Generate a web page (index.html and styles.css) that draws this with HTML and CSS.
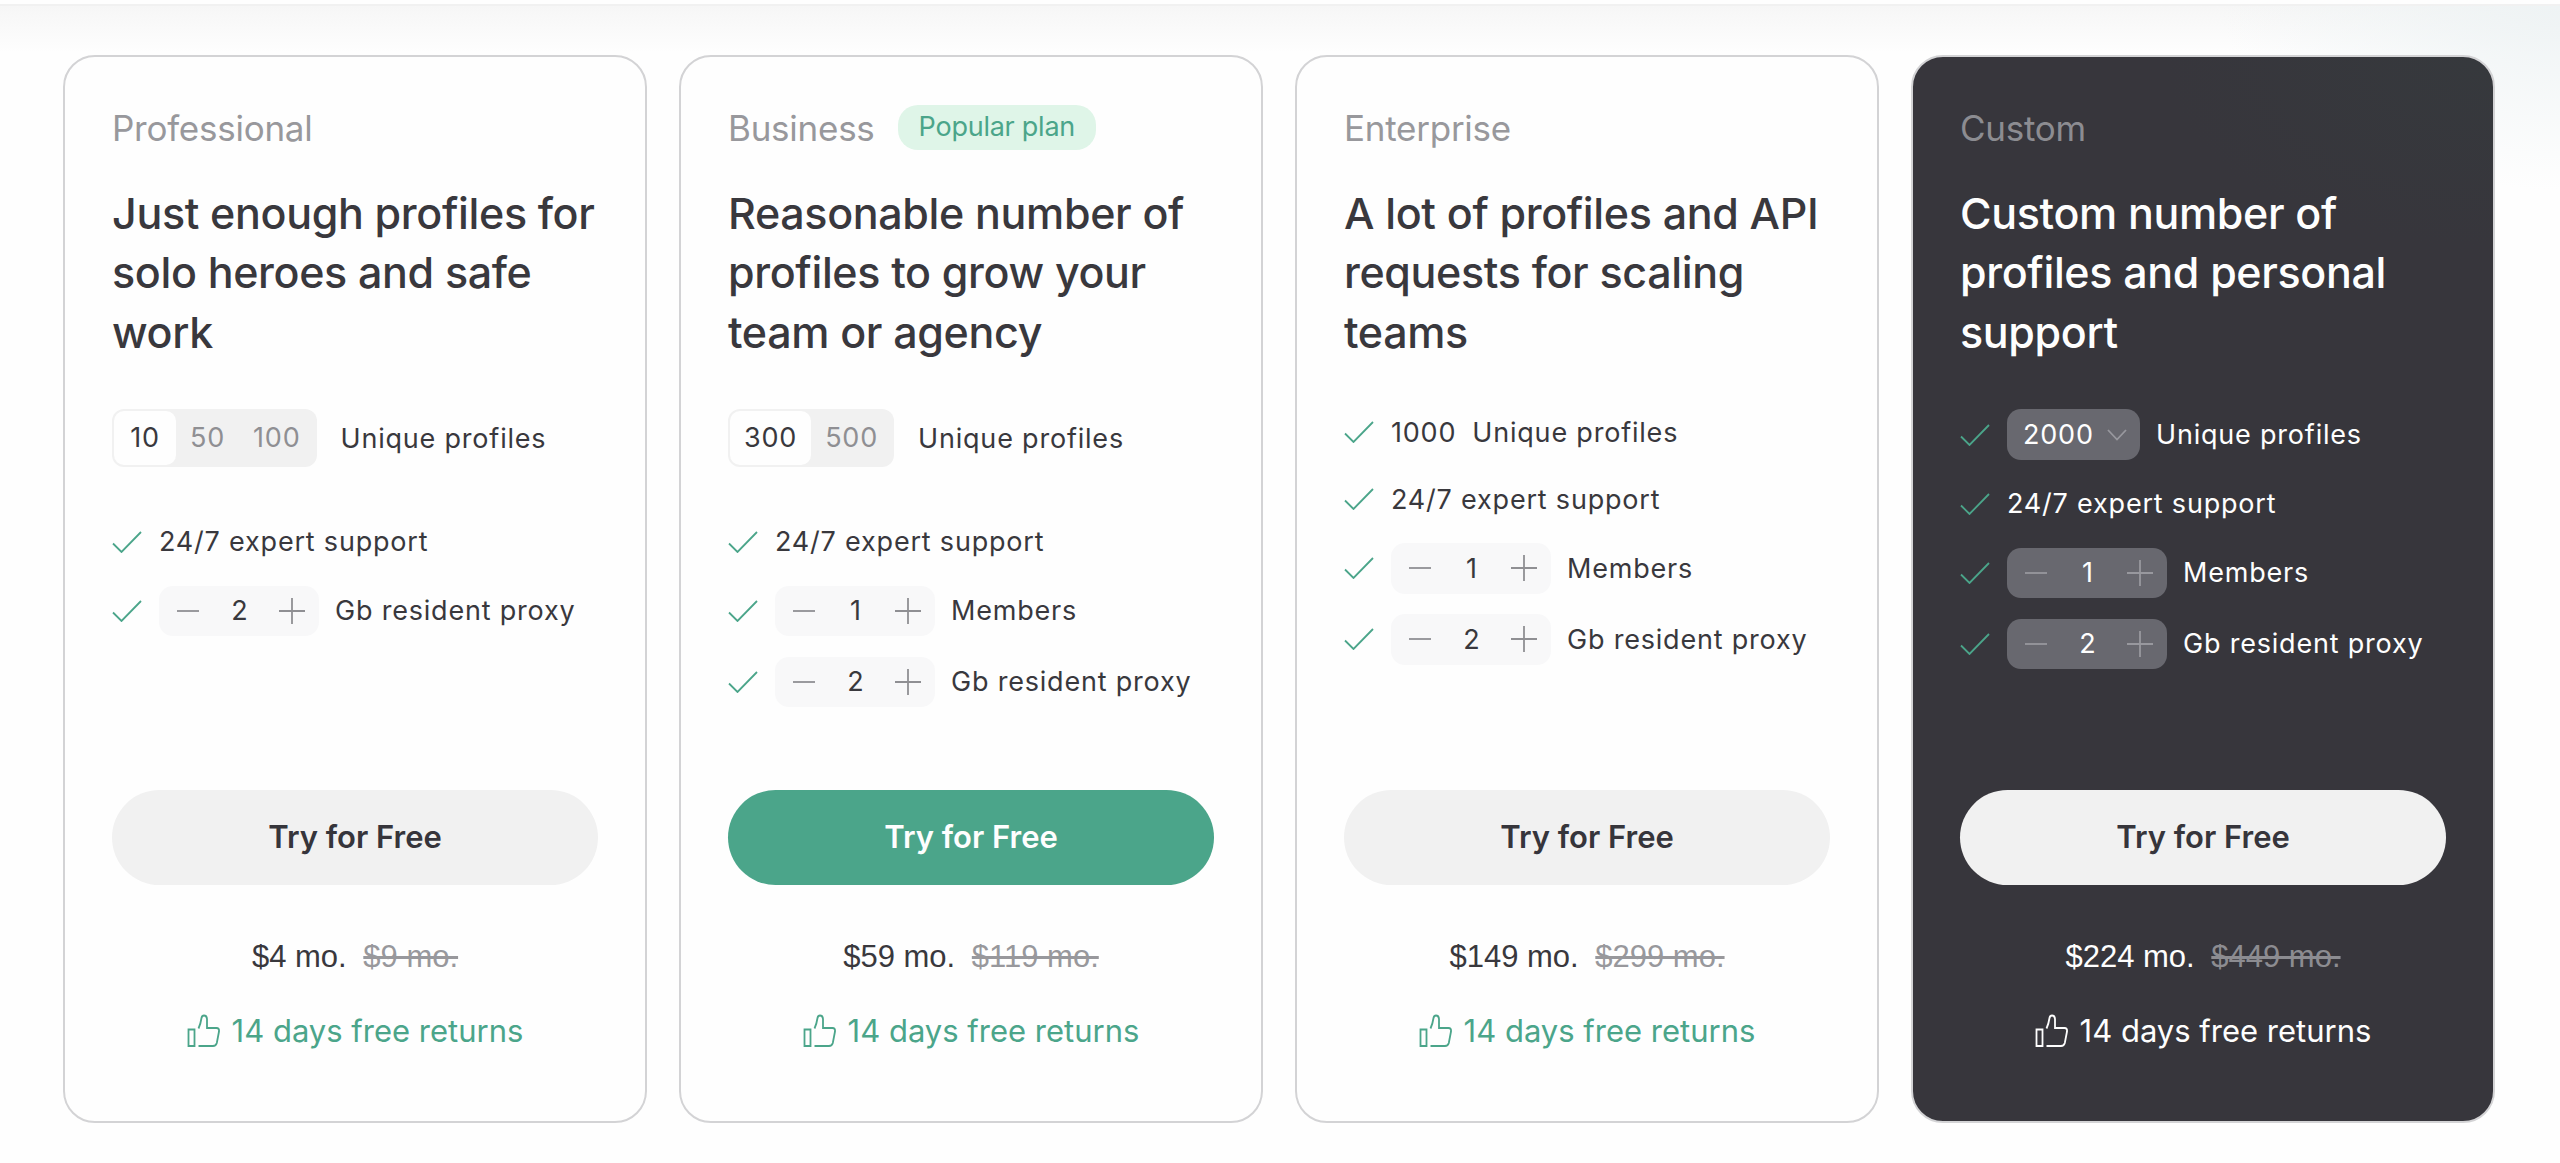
FILE: index.html
```html
<!DOCTYPE html>
<html lang="en">
<head>
  <meta charset="UTF-8">
  <meta name="viewport" content="width=device-width, initial-scale=1.0">
  <title>Pricing</title>
  <link rel="stylesheet" href="styles.css">
</head>
<body>
<!-- shared icons -->
<svg class="sprite" width="0" height="0">
  <symbol id="check" viewBox="0 0 30 22"><path d="M1 12.5 L9.5 21 L29 1"/></symbol>
  <symbol id="minus" viewBox="0 0 26 28"><path d="M2 14 H24"/></symbol>
  <symbol id="plus" viewBox="0 0 26 28"><path d="M0 14 H26 M13 1 V27"/></symbol>
  <symbol id="chevron" viewBox="0 0 20 12"><path d="M1 1 L10 10.5 L19 1"/></symbol>
  <symbol id="thumb" viewBox="0 0 34 34">
    <path d="M1.5 15.5 H7.5 V32 H1.5 Z"/>
    <path d="M11.5 32 H26 Q29 32 29.8 29 L32 17.5 Q32.4 14 29.5 14 H20 V5 Q19.8 1.5 17 1.5 Q15 1.5 14.5 4 Q13.5 10.5 11.5 14.5"/>
  </symbol>
</svg>

<div class="page">
  <div class="plans">

    <div class="plan">
      <div class="plan-name">Professional</div>
      <h2 class="plan-title">Just enough profiles for solo heroes and safe work</h2>
      <div class="features">
        <div class="feature feature-switch">
          <div class="switch"><span class="active">10</span><span>50</span><span>100</span></div>
          Unique profiles
        </div>
        <div class="feature"><svg class="check"><use href="#check"/></svg>24/7 expert support</div>
        <div class="feature"><svg class="check"><use href="#check"/></svg><div class="stepper"><svg><use href="#minus"/></svg><span>2</span><svg><use href="#plus"/></svg></div>Gb resident proxy</div>
      </div>
      <a class="btn">Try for Free</a>
      <div class="price">$4 mo. <s>$9 mo.</s></div>
      <div class="returns"><svg><use href="#thumb"/></svg>14 days free returns</div>
    </div>

    <div class="plan">
      <div class="plan-name">Business <span class="badge">Popular plan</span></div>
      <h2 class="plan-title">Reasonable number of profiles to grow your team or agency</h2>
      <div class="features">
        <div class="feature feature-switch">
          <div class="switch"><span class="active">300</span><span>500</span></div>
          Unique profiles
        </div>
        <div class="feature"><svg class="check"><use href="#check"/></svg>24/7 expert support</div>
        <div class="feature"><svg class="check"><use href="#check"/></svg><div class="stepper"><svg><use href="#minus"/></svg><span>1</span><svg><use href="#plus"/></svg></div>Members</div>
        <div class="feature"><svg class="check"><use href="#check"/></svg><div class="stepper"><svg><use href="#minus"/></svg><span>2</span><svg><use href="#plus"/></svg></div>Gb resident proxy</div>
      </div>
      <a class="btn btn-green">Try for Free</a>
      <div class="price">$59 mo. <s>$119 mo.</s></div>
      <div class="returns"><svg><use href="#thumb"/></svg>14 days free returns</div>
    </div>

    <div class="plan">
      <div class="plan-name">Enterprise</div>
      <h2 class="plan-title">A lot of profiles and API requests for scaling teams</h2>
      <div class="features">
        <div class="feature"><svg class="check"><use href="#check"/></svg><span class="amount">1000</span>Unique profiles</div>
        <div class="feature"><svg class="check"><use href="#check"/></svg>24/7 expert support</div>
        <div class="feature"><svg class="check"><use href="#check"/></svg><div class="stepper"><svg><use href="#minus"/></svg><span>1</span><svg><use href="#plus"/></svg></div>Members</div>
        <div class="feature"><svg class="check"><use href="#check"/></svg><div class="stepper"><svg><use href="#minus"/></svg><span>2</span><svg><use href="#plus"/></svg></div>Gb resident proxy</div>
      </div>
      <a class="btn">Try for Free</a>
      <div class="price">$149 mo. <s>$299 mo.</s></div>
      <div class="returns"><svg><use href="#thumb"/></svg>14 days free returns</div>
    </div>

    <div class="plan plan-dark">
      <div class="plan-name">Custom</div>
      <h2 class="plan-title">Custom number of profiles and personal support</h2>
      <div class="features">
        <div class="feature"><svg class="check"><use href="#check"/></svg><div class="select">2000<svg><use href="#chevron"/></svg></div>Unique profiles</div>
        <div class="feature"><svg class="check"><use href="#check"/></svg>24/7 expert support</div>
        <div class="feature"><svg class="check"><use href="#check"/></svg><div class="stepper"><svg><use href="#minus"/></svg><span>1</span><svg><use href="#plus"/></svg></div>Members</div>
        <div class="feature"><svg class="check"><use href="#check"/></svg><div class="stepper"><svg><use href="#minus"/></svg><span>2</span><svg><use href="#plus"/></svg></div>Gb resident proxy</div>
      </div>
      <a class="btn">Try for Free</a>
      <div class="price">$224 mo. <s>$449 mo.</s></div>
      <div class="returns"><svg><use href="#thumb"/></svg>14 days free returns</div>
    </div>

  </div>
</div>
</body>
</html>
```
FILE: styles.css
```css
* {
  box-sizing: border-box;
}
body {
  margin: 0;
  background: #fefefe;
  color: #39383d;
  font-family: Inter, "Liberation Sans", sans-serif;
}
.sprite {
  display: none;
}
svg {
  flex: none;
  fill: none;
  stroke: currentColor;
}
.page {
  height: 1163px;
  padding: 55px 65px 0 63px;
  background:
    linear-gradient(#fefefe 4px, #f1f1f1 4px, #f1f1f1 6px, transparent 6px),
    radial-gradient(ellipse 340px 190px at 2560px 0, #eef3f4, rgba(251, 253, 253, 0)),
    linear-gradient(#f6f6f6 6px, #fefefe 52px);
}
.plans {
  display: grid;
  grid-template-columns: repeat(4, 584px);
  gap: 32px;
}
.plan {
  display: flex;
  flex-direction: column;
  height: 1068px;
  padding: 48px 47px;
  border: 2px solid #d3d3d5;
  border-radius: 32px;
  background: #fefefe;
}
.plan-name {
  display: flex;
  align-items: center;
  gap: 23px;
  height: 45px;
  color: #98989c;
  font-size: 35px;
  letter-spacing: -0.25px;
}
.badge {
  height: 45px;
  padding: 0 21px;
  border-radius: 20px;
  background: #dff5e8;
  color: #4ba58a;
  font-size: 27px;
  line-height: 44px;
}
.plan-title {
  height: 178px;
  margin: 34px -20px 47px 0;
  font-size: 43px;
  font-weight: 500;
  letter-spacing: -0.35px;
  line-height: 59.4px;
}
.features {
  display: flex;
  flex-direction: column;
  gap: 20.5px;
  height: 381px;
  font-size: 27px;
  letter-spacing: 0.8px;
  white-space: nowrap;
}
.feature {
  display: flex;
  align-items: center;
  min-height: 46.5px;
}
.feature-switch {
  gap: 24px;
  margin-bottom: 31px;
}
.check {
  width: 30px;
  height: 22px;
  margin-right: 17px;
  color: #4ba58a;
  stroke-width: 1.8;
}
.amount {
  margin-right: 16px;
}
.switch {
  display: flex;
  height: 58px;
  padding: 2px;
  border-radius: 12px;
  background: #f1f1f1;
  color: #8f8f93;
  line-height: 54px;
  text-align: center;
}
.switch span {
  min-width: 62px;
  padding: 0 14px;
  border-radius: 10px;
}
.switch .active {
  background: #fefefe;
  color: #39383d;
}
.stepper {
  display: flex;
  align-items: center;
  justify-content: space-between;
  width: 160px;
  height: 50.5px;
  margin-right: 16px;
  padding: 0 14px 0 16px;
  border-radius: 14px;
  background: #f8f8f9;
}
.stepper svg {
  width: 26px;
  height: 28px;
  color: #8f8f93;
  stroke-width: 1.8;
}
.select {
  display: flex;
  align-items: center;
  justify-content: space-between;
  width: 133px;
  height: 51px;
  margin-right: 16px;
  padding: 0 13px 0 16px;
  border-radius: 14px;
}
.select svg {
  width: 20px;
  height: 12px;
  stroke-width: 1.8;
}
.btn {
  height: 95px;
  border-radius: 48px;
  background: #f1f1f1;
  color: #36353b;
  font-size: 31px;
  font-weight: 600;
  line-height: 94px;
  text-align: center;
}
.btn-green {
  background: #4ba58a;
  color: #fefefe;
}
.price {
  margin-top: 52px;
  font-family: "Liberation Sans", sans-serif;
  font-size: 31px;
  line-height: 40px;
  text-align: center;
}
.price s {
  margin-left: 8px;
  color: #98989c;
}
.returns {
  display: flex;
  align-items: center;
  justify-content: center;
  gap: 11px;
  margin-top: 34px;
  color: #4ba58a;
  font-size: 31px;
  line-height: 40px;
}
.returns svg {
  width: 34px;
  height: 34px;
  stroke-width: 1.8;
}

/* dark card */
.plan-dark {
  background: radial-gradient(ellipse 330px 190px at 100% 0, #36393d, #37363c) padding-box, #37363c;
  color: #fefefe;
}
.plan-dark .stepper,
.plan-dark .select {
  background: #68686f;
}
.plan-dark .stepper svg,
.plan-dark .select svg {
  color: #98989e;
}
.plan-dark .plan-name,
.plan-dark .price s {
  color: #8c8c91;
}
.plan-dark .returns {
  color: #fefefe;
}
```
